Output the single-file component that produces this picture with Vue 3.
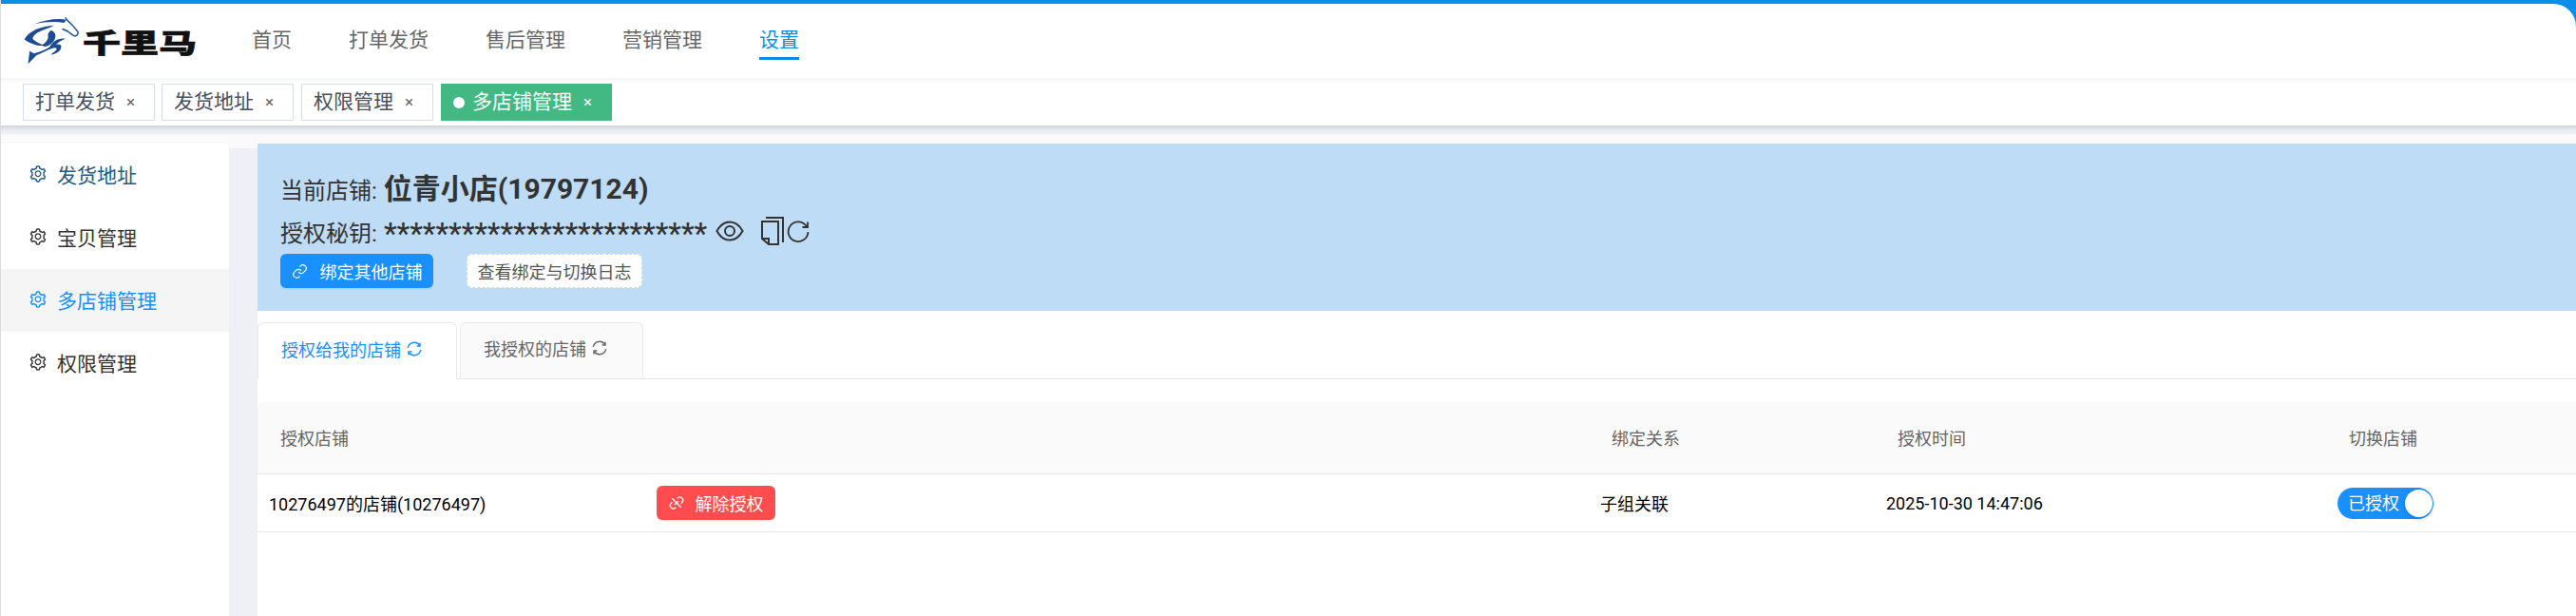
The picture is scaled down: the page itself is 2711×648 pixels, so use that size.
<script setup>
const navItems = ['首页', '打单发货', '售后管理', '营销管理', '设置']
const tags = ['打单发货', '发货地址', '权限管理']
const sideItems = [
  { name: '发货地址', cls: 'first' },
  { name: '宝贝管理', cls: '' },
  { name: '多店铺管理', cls: 'active' },
  { name: '权限管理', cls: '' }
]
const gearPath = 'M924.8 625.7l-65.5-56c3.1-19 4.7-38.4 4.7-57.8s-1.6-38.8-4.7-57.8l65.5-56a32.03 32.03 0 0 0 9.3-35.2l-.9-2.6a443.74 443.74 0 0 0-79.7-137.9l-1.8-2.1a32.12 32.12 0 0 0-35.1-9.5l-81.3 28.9c-30-24.6-63.5-44-99.7-57.6l-15.7-85a32.05 32.05 0 0 0-25.8-25.7l-2.7-.5c-52.1-9.4-106.9-9.4-159 0l-2.7.5a32.05 32.05 0 0 0-25.8 25.7l-15.8 85.4a351.86 351.86 0 0 0-99 57.4l-81.9-29.1a32 32 0 0 0-35.1 9.5l-1.8 2.1a446.02 446.02 0 0 0-79.7 137.9l-.9 2.6c-4.5 12.5-.8 26.5 9.3 35.2l66.3 56.6c-3.1 18.8-4.6 38-4.6 57.1 0 19.2 1.5 38.4 4.6 57.1L99 625.5a32.03 32.03 0 0 0-9.3 35.2l.9 2.6c18.1 50.4 44.9 96.9 79.7 137.9l1.8 2.1a32.12 32.12 0 0 0 35.1 9.5l81.9-29.1c29.8 24.5 63.1 43.9 99 57.4l15.8 85.4a32.05 32.05 0 0 0 25.8 25.7l2.7.5a449.4 449.4 0 0 0 159 0l2.7-.5a32.05 32.05 0 0 0 25.8-25.7l15.7-85a350 350 0 0 0 99.7-57.6l81.3 28.9a32 32 0 0 0 35.1-9.5l1.8-2.1c34.8-41.1 61.6-87.5 79.7-137.9l.9-2.6c4.5-12.3.8-26.3-9.3-35zM788.3 465.9c2.5 15.1 3.8 30.6 3.8 46.1s-1.3 31-3.8 46.1l-6.6 40.1 74.7 63.9a370.03 370.03 0 0 1-42.6 73.6L721 702.8l-31.4 25.8c-23.9 19.6-50.5 35-79.3 45.8l-38.1 14.3-17.9 97a377.5 377.5 0 0 1-85 0l-17.9-97.2-37.8-14.5c-28.5-10.8-55-26.2-78.7-45.7l-31.4-25.9-93.4 33.2c-17-22.9-31.2-47.6-42.6-73.6l75.5-64.5-6.5-40c-2.4-14.9-3.7-30.3-3.7-45.5 0-15.3 1.2-30.6 3.7-45.5l6.5-40-75.5-64.5c11.3-26.1 25.6-50.7 42.6-73.6l93.4 33.2 31.4-25.9c23.7-19.5 50.2-34.9 78.7-45.7l37.9-14.3 17.9-97.2c28.1-3.2 56.8-3.2 85 0l17.9 97 38.1 14.3c28.7 10.8 55.4 26.2 79.3 45.8l31.4 25.8 92.8-32.9c17 22.9 31.2 47.6 42.6 73.6L781.8 426l6.5 39.9zM512 326c-97.2 0-176 78.8-176 176s78.8 176 176 176 176-78.8 176-176-78.8-176-176-176zm79.2 255.2A111.6 111.6 0 0 1 512 614c-29.9 0-58-11.7-79.2-32.8A111.6 111.6 0 0 1 400 502c0-29.9 11.7-58 32.8-79.2C454 401.6 482.1 390 512 390c29.9 0 58 11.6 79.2 32.8A111.6 111.6 0 0 1 624 502c0 29.9-11.7 58-32.8 79.2z'
</script>

<template>
  <div class="page">
    <div class="top">
      <header class="header">
        <div class="logo">
          <svg class="horse" viewBox="13 0 179 154">
            <path d="M48 22C80 10 118 3 152 8l-8 10C112 13 80 16 48 22z" fill="#1c4c94" />
            <path d="M15 72C30 45 66 30 112 27C92 37 72 42 58 50C48 56 42 63 42 71C52 80 64 86 78 92C60 95 34 86 15 72z" fill="#1c4c94" />
            <path d="M148 1L156 12C168 22 180 36 189 48C191 58 181 65 172 58C160 46 150 42 138 38" fill="none" stroke="#2a5ca4" stroke-width="5" />
            <path d="M102 42C120 50 122 70 100 88C88 98 78 96 70 92C84 84 94 72 92 60C90 54 94 48 102 42z" fill="#1c4c94" />
            <path d="M96 98C106 80 124 66 148 70C136 74 124 82 118 90C130 86 138 90 134 100C130 112 118 120 100 122L118 108C122 102 118 98 110 100C94 104 72 116 54 124L27 152L32 110L46 118C64 114 82 106 96 98z" fill="#1c4c94" />
          </svg>
          <span class="logo-text">千里马</span>
        </div>
        <nav class="nav">
          <span v-for="(item, i) in navItems" :key="item" class="nav-item" :class="{ on: i === 4 }">{{ item }}</span>
        </nav>
      </header>
    </div>

    <div class="tags">
      <span v-for="t in tags" :key="t" class="tag">{{ t }}<i class="close">×</i></span>
      <span class="tag current"><b class="dot"></b>多店铺管理<i class="close">×</i></span>
    </div>
    <div class="tags-shadow"></div>

    <div class="main">
      <aside class="side">
        <div v-for="s in sideItems" :key="s.name" class="side-item" :class="s.cls">
          <svg class="gear" viewBox="0 0 1024 1024"><path :d="gearPath" fill="currentColor" /></svg>
          <span>{{ s.name }}</span>
        </div>
      </aside>
      <div class="gutter"></div>
      <section class="content">
        <div class="banner">
          <div class="line-one">当前店铺: <strong>位青小店(19797124)</strong></div>
          <div class="line-two">
            <span class="key-label">授权秘钥:</span>
            <span class="stars">*************************</span>
            <svg class="eye" viewBox="0 0 30 22" fill="none" stroke="#333" stroke-width="2">
              <path d="M1.5 11C5 4.5 9.5 1.5 15 1.5S25 4.5 28.5 11C25 17.5 20.5 20.5 15 20.5S5 17.5 1.5 11z" />
              <circle cx="15" cy="11" r="5" />
            </svg>
            <svg class="copy" viewBox="0 0 24 30" fill="none" stroke="#333" stroke-width="2">
              <path d="M5 1H23V27" />
              <path d="M1 5H18V29H8L1 23z" />
              <path d="M1 23H8V29" />
            </svg>
            <svg class="reload" viewBox="0 0 24 24" fill="none" stroke="#333" stroke-width="1.8">
              <path d="M21 6.5A10.4 10.4 0 1 0 22.4 12" />
              <path d="M22 1.5V7H16.5" />
            </svg>
          </div>
          <div class="actions">
            <button class="btn-primary">
              <svg class="btn-icon" viewBox="0 0 24 24" fill="none" stroke="#fff" stroke-width="1.7">
                <path d="M10 13a5 5 0 0 0 7.5.5l3-3a5 5 0 0 0-7-7L12 5" />
                <path d="M14 11a5 5 0 0 0-7.5-.5l-3 3a5 5 0 0 0 7 7L12 19" />
              </svg>
              绑定其他店铺
            </button>
            <button class="btn-log">查看绑定与切换日志</button>
          </div>
        </div>

        <div class="tabs">
          <div class="tab on">
            授权给我的店铺
            <svg class="sync" viewBox="0 0 24 24" fill="none" stroke="currentColor" stroke-width="1.9">
              <path d="M3 10.5A9.2 9.2 0 0 1 19.5 7" />
              <path d="M21 13.5A9.2 9.2 0 0 1 4.5 17" />
              <path d="M20 3.5V8H15.5" />
              <path d="M4 20.5V16H8.5" />
            </svg>
          </div>
          <div class="tab">
            我授权的店铺
            <svg class="sync" viewBox="0 0 24 24" fill="none" stroke="currentColor" stroke-width="1.9">
              <path d="M3 10.5A9.2 9.2 0 0 1 19.5 7" />
              <path d="M21 13.5A9.2 9.2 0 0 1 4.5 17" />
              <path d="M20 3.5V8H15.5" />
              <path d="M4 20.5V16H8.5" />
            </svg>
          </div>
        </div>

        <div class="table">
          <div class="thead">
            <div>授权店铺</div>
            <div>绑定关系</div>
            <div>授权时间</div>
            <div>切换店铺</div>
          </div>
          <div class="trow">
            <div class="store-cell">
              <span class="store-name">10276497的店铺(10276497)</span>
              <button class="btn-danger">
                <svg class="btn-icon small" viewBox="0 0 24 24" fill="none" stroke="#fff" stroke-width="2">
                  <path d="M13 5l1-1a5 5 0 0 1 7 7l-2 2" />
                  <path d="M11 19l-1 1a5 5 0 0 1-7-7l2-2" />
                  <path d="M9 15l6-6" />
                  <path d="M5 5l14 14" />
                </svg>
                解除授权
              </button>
            </div>
            <div>子组关联</div>
            <div>2025-10-30 14:47:06</div>
            <div>
              <span class="switch">已授权<b class="knob"></b></span>
            </div>
          </div>
        </div>
      </section>
    </div>
  </div>
</template>

<style scoped>
.page {
  width: 2711px;
  height: 648px;
  overflow: hidden;
  box-sizing: border-box;
  border-left: 1px solid #dcdcdc;
  background: #fff;
  font-family: Roboto, "Noto Sans CJK SC", sans-serif;
  color: #333;
}

.top {
  background: #0a8ee8;
  padding-top: 4px;
  margin-left: -1px;
}

.header {
  height: 78px;
  background: #fff;
  border-top-right-radius: 24px;
  display: flex;
  align-items: flex-start;
}

.logo {
  width: 265px;
  height: 78px;
  display: flex;
  align-items: flex-start;
  flex-shrink: 0;
  padding-left: 25px;
  box-sizing: border-box;
}

.horse {
  width: 58px;
  height: 52px;
  margin-top: 13px;
  flex-shrink: 0;
}

.logo-text {
  margin: 25px 0 0 4px;
  font-size: 28px;
  line-height: 36px;
  font-weight: 900;
  color: #111;
  -webkit-text-stroke: 0.6px #111;
  transform: scaleX(1.43);
  transform-origin: left center;
  white-space: nowrap;
}

.nav {
  display: flex;
  gap: 60px;
  padding-top: 24px;
}

.nav-item {
  font-size: 21px;
  line-height: 28px;
  color: #666;
  padding-bottom: 4px;
  border-bottom: 3px solid transparent;
}

.nav-item.on {
  color: #0a8ee8;
  border-bottom-color: #0a8ee8;
}

.tags {
  height: 50px;
  box-sizing: border-box;
  padding: 6px 0 0 23px;
  display: flex;
  align-items: flex-start;
  gap: 8px;
  background: linear-gradient(#f6f6f6, #fff 6px);
}

.tag {
  height: 39px;
  box-sizing: border-box;
  width: 139px;
  padding-left: 12px;
  border: 1px solid #d8dce5;
  background: #fff;
  color: #495060;
  font-size: 21px;
  line-height: 37px;
  display: flex;
  align-items: center;
}

.tag:first-child {
  margin-right: -1px;
}

.close {
  font-style: normal;
  font-size: 17px;
  margin-left: 12px;
  color: #666;
}

.tag.current {
  width: 180px;
  padding-left: 12px;
  background: #42b983;
  border-color: #42b983;
  color: #fff;
}

.tag.current .close {
  color: #fff;
  margin-left: 12px;
}

.dot {
  width: 12px;
  height: 12px;
  border-radius: 50%;
  background: #fff;
  margin-right: 8px;
}

.tags-shadow {
  height: 9px;
  background: linear-gradient(#cfd3dc, #eceef3 60%, #eef0f5);
}

.main {
  display: flex;
  height: 507px;
  padding-top: 10px;
  box-sizing: border-box;
  background: #fafafa;
}

.side {
  width: 240px;
  flex-shrink: 0;
  background: #fff;
}

.side-item {
  height: 66px;
  box-sizing: border-box;
  padding: 0 0 2px 29px;
  display: flex;
  align-items: center;
  gap: 10px;
  font-size: 21px;
  color: #333;
}

.side-item.first {
  color: #235c84;
}

.side-item.active {
  color: #1890ff;
  background: #f5f5f6;
}

.gear {
  width: 20px;
  height: 20px;
}

.gutter {
  width: 30px;
  flex-shrink: 0;
  margin-top: 5px;
  background: #eef0f5;
}

.content {
  flex: 1;
  background: #fff;
  min-width: 0;
}

.banner {
  height: 176px;
  box-sizing: border-box;
  padding: 28px 0 0 24px;
  background: #bedcf6;
}

.line-one {
  height: 40px;
  line-height: 40px;
  font-size: 24px;
  color: #333;
}

.line-one strong {
  font-size: 30px;
  font-weight: 700;
  margin-left: 1px;
}

.line-two {
  height: 48px;
  font-size: 24px;
  display: flex;
  align-items: center;
}

.key-label {
  width: 109px;
}

.stars {
  font-size: 30.7px;
  font-weight: 500;
  height: 32px;
  line-height: 38px;
}

.eye {
  width: 30px;
  height: 22px;
  margin-left: 9px;
}

.copy {
  width: 24px;
  height: 30px;
  margin-left: 18px;
}

.reload {
  width: 24px;
  height: 24px;
  margin-left: 3px;
  margin-top: 2px;
}

.actions {
  display: flex;
  gap: 35px;
}

button {
  font-family: inherit;
  font-size: 18px;
  padding: 0;
  height: 36px;
  border: none;
  display: flex;
  align-items: center;
  justify-content: center;
}

.btn-primary {
  width: 161px;
  background: #1890ff;
  color: #fff;
  border-radius: 6px;
  gap: 13px;
  box-shadow: 0 2px 0 rgba(5, 145, 255, 0.1);
}

.btn-log {
  width: 185px;
  background: #fff;
  color: #555;
  border: 1px dashed #d9d9d9;
  border-radius: 6px;
  box-sizing: border-box;
}

.btn-icon {
  width: 17px;
  height: 17px;
}

.tabs {
  margin-top: 12px;
  height: 60px;
  box-sizing: border-box;
  display: flex;
  gap: 3px;
  border-bottom: 1px solid #e8e8e8;
}

.tab {
  width: 193px;
  height: 59px;
  box-sizing: border-box;
  border: 1px solid #eaeaea;
  border-bottom: none;
  border-radius: 6px 6px 0 0;
  background: #fafafa;
  color: #666;
  font-size: 18px;
  display: flex;
  align-items: center;
  padding-left: 24px;
  padding-bottom: 6px;
  gap: 5px;
}

.tab.on {
  width: 210px;
  height: 60px;
  background: #fff;
  color: #1890ff;
  border-left-color: #eaeaea;
}

.sync {
  width: 18px;
  height: 18px;
}

.table {
  margin-top: 24px;
}

.thead,
.trow {
  display: grid;
  grid-template-columns: 1401px 301px 475px 1fr;
  align-items: center;
  font-size: 18px;
}

.thead {
  height: 76px;
  box-sizing: border-box;
  padding-bottom: 2px;
  background: #fafafa;
  border-bottom: 1px solid #e8e8e8;
  border-radius: 6px 0 0 0;
  color: #666;
}

.thead > div {
  padding-left: 24px;
}

.trow {
  height: 61px;
  box-sizing: border-box;
  border-bottom: 1px solid #e8e8e8;
  color: #000;
}

.trow > div {
  padding-left: 12px;
}

.store-cell {
  display: flex;
  align-items: center;
}

.store-name {
  width: 408px;
  flex-shrink: 0;
}

.btn-danger {
  width: 125px;
  background: #ff4d4f;
  color: #fff;
  border-radius: 6px;
  gap: 12px;
  box-shadow: 0 2px 0 rgba(255, 38, 5, 0.06);
}

.btn-icon.small {
  width: 16px;
  height: 16px;
}

.switch {
  width: 101px;
  height: 33px;
  border-radius: 17px;
  background: #1890ff;
  color: #fff;
  font-size: 18px;
  line-height: 33px;
  display: block;
  position: relative;
  box-sizing: border-box;
  padding-left: 11px;
}

.knob {
  position: absolute;
  top: 2px;
  right: 1px;
  width: 29px;
  height: 29px;
  border-radius: 50%;
  background: #fff;
  box-shadow: 0 2px 4px rgba(0, 35, 11, 0.2);
}
</style>

<style>
html,
body {
  margin: 0;
  background: #fff;
}
</style>
